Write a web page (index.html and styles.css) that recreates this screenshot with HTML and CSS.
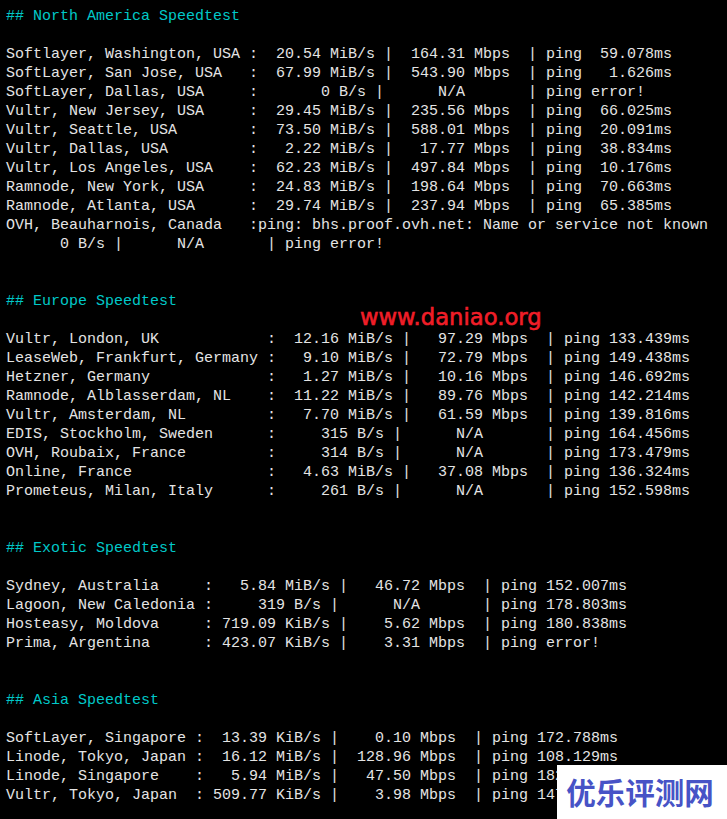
FILE: index.html
```html
<!DOCTYPE html>
<html lang="zh">
<head>
<meta charset="utf-8">
<title>Speedtest</title>
<link rel="stylesheet" href="styles.css">
</head>
<body>
<pre class="term"><span class="head">## North America Speedtest</span>

Softlayer, Washington, USA :  20.54 MiB/s |  164.31 Mbps  | ping  59.078ms
SoftLayer, San Jose, USA   :  67.99 MiB/s |  543.90 Mbps  | ping   1.626ms
SoftLayer, Dallas, USA     :       0 B/s |      N/A       | ping error!
Vultr, New Jersey, USA     :  29.45 MiB/s |  235.56 Mbps  | ping  66.025ms
Vultr, Seattle, USA        :  73.50 MiB/s |  588.01 Mbps  | ping  20.091ms
Vultr, Dallas, USA         :   2.22 MiB/s |   17.77 Mbps  | ping  38.834ms
Vultr, Los Angeles, USA    :  62.23 MiB/s |  497.84 Mbps  | ping  10.176ms
Ramnode, New York, USA     :  24.83 MiB/s |  198.64 Mbps  | ping  70.663ms
Ramnode, Atlanta, USA      :  29.74 MiB/s |  237.94 Mbps  | ping  65.385ms
OVH, Beauharnois, Canada   :ping: bhs.proof.ovh.net: Name or service not known
      0 B/s |      N/A       | ping error!


<span class="head">## Europe Speedtest</span>

Vultr, London, UK            :  12.16 MiB/s |   97.29 Mbps  | ping 133.439ms
LeaseWeb, Frankfurt, Germany :   9.10 MiB/s |   72.79 Mbps  | ping 149.438ms
Hetzner, Germany             :   1.27 MiB/s |   10.16 Mbps  | ping 146.692ms
Ramnode, Alblasserdam, NL    :  11.22 MiB/s |   89.76 Mbps  | ping 142.214ms
Vultr, Amsterdam, NL         :   7.70 MiB/s |   61.59 Mbps  | ping 139.816ms
EDIS, Stockholm, Sweden      :     315 B/s |      N/A       | ping 164.456ms
OVH, Roubaix, France         :     314 B/s |      N/A       | ping 173.479ms
Online, France               :   4.63 MiB/s |   37.08 Mbps  | ping 136.324ms
Prometeus, Milan, Italy      :     261 B/s |      N/A       | ping 152.598ms


<span class="head">## Exotic Speedtest</span>

Sydney, Australia     :   5.84 MiB/s |   46.72 Mbps  | ping 152.007ms
Lagoon, New Caledonia :     319 B/s |      N/A       | ping 178.803ms
Hosteasy, Moldova     : 719.09 KiB/s |    5.62 Mbps  | ping 180.838ms
Prima, Argentina      : 423.07 KiB/s |    3.31 Mbps  | ping error!


<span class="head">## Asia Speedtest</span>

SoftLayer, Singapore :  13.39 KiB/s |    0.10 Mbps  | ping 172.788ms
Linode, Tokyo, Japan :  16.12 MiB/s |  128.96 Mbps  | ping 108.129ms
Linode, Singapore    :   5.94 MiB/s |   47.50 Mbps  | ping 182
Vultr, Tokyo, Japan  : 509.77 KiB/s |    3.98 Mbps  | ping 147</pre>
<div class="mark-url">www.daniao.org</div>
<div class="mark-box">优乐评测网</div>
</body>
</html>
```
FILE: styles.css
```css
html, body {
  margin: 0;
  height: 100%;
  background: #000;
  overflow: hidden;
}
body {
  position: relative;
}
.term {
  margin: 0;
  padding: 7px 0 0 6px;
  font-family: "Liberation Mono", monospace;
  font-size: 15px;
  line-height: 19px;
  color: #e4e4e4;
  white-space: pre;
}
.head {
  color: #00c8c8;
}
.mark-url {
  position: absolute;
  left: 360px;
  top: 304px;
  font-family: "DejaVu Sans", sans-serif;
  font-size: 22.7px;
  line-height: 26px;
  font-weight: 400;
  color: #f01e28;
  -webkit-text-stroke: 0.6px #f01e28;
  white-space: nowrap;
}
.mark-box {
  position: absolute;
  left: 557px;
  top: 765px;
  box-sizing: border-box;
  width: 170px;
  height: 54px;
  padding: 0 4px 2px 0;
  display: flex;
  align-items: center;
  justify-content: center;
  background: #fff;
  font-family: "Noto Sans CJK SC", sans-serif;
  font-size: 29.5px;
  font-weight: 700;
  color: #4753c6;
  white-space: nowrap;
}
```
